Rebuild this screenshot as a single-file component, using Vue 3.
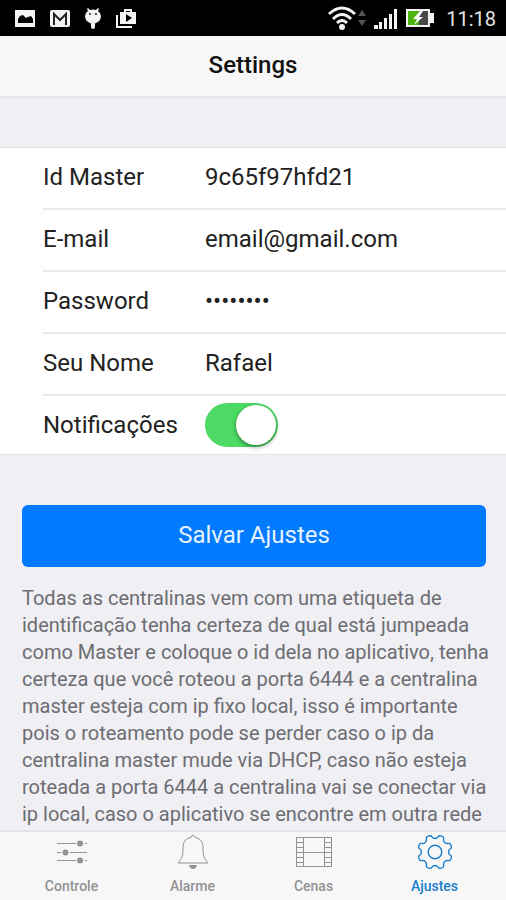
<script setup>
import { reactive, ref } from 'vue'

const fields = reactive([
  { id: 'master', label: 'Id Master', type: 'text', value: '9c65f97hfd21' },
  { id: 'email', label: 'E-mail', type: 'email', value: 'email@gmail.com' },
  { id: 'password', label: 'Password', type: 'password', value: 'abcd1234' },
  { id: 'name', label: 'Seu Nome', type: 'text', value: 'Rafael' }
])
const notify = ref(true)
const active = ref('Ajustes')
const tabs = ['Controle', 'Alarme', 'Cenas', 'Ajustes']

// Eight rounded teeth, with a notch pointing straight up
const gearPath = (() => {
  const points = []
  for (let i = 0; i < 240; i++) {
    const a = (i / 240) * Math.PI * 2
    const wave = Math.tanh(-2.2 * Math.cos(8 * a)) / Math.tanh(2.2)
    const r = 15.5 + 1.7 * wave
    points.push(`${(20 + r * Math.cos(a)).toFixed(2)} ${(20 + r * Math.sin(a)).toFixed(2)}`)
  }
  return `M${points.join('L')}Z`
})()
</script>

<template>
  <div class="screen">
    <div class="status">
      <div class="status-left">
        <svg width="22" height="20" viewBox="0 0 22 20">
          <path fill="#f4f4f4" fill-rule="evenodd" d="M1 1h20v17H1zM4 14h15v-4l-2-3-3 1-2 1-3-3-3 1-2 3z" />
        </svg>
        <svg width="22" height="20" viewBox="0 0 22 20">
          <rect x="1" y="1" width="20" height="17" rx="2" fill="#f4f4f4" />
          <path d="M5 16V5l6 6 6-6v11" fill="none" stroke="#222" stroke-width="2" />
        </svg>
        <svg width="18" height="24" viewBox="0 0 18 24">
          <path fill="#f4f4f4" d="M4 1l2 2q3-1 6 0l2-2 1 1-1 2q3 2 3 5 0 5-5 7-1 0-1 1v3q0 2-2 2t-2-2v-3q0-1-1-1-5-2-5-7 0-3 3-5L3 2z" />
          <circle cx="6" cy="7" r="1" fill="#222" /><circle cx="12" cy="7" r="1" fill="#222" />
        </svg>
        <svg width="22" height="22" viewBox="0 0 22 22">
          <path d="M2 7v12h15" fill="none" stroke="#f4f4f4" stroke-width="2" />
          <path d="M10 5V2h6v3" fill="none" stroke="#f4f4f4" stroke-width="2" />
          <path fill="#f4f4f4" fill-rule="evenodd" d="M5 4h16v12H5zM11 6v8l6-4z" />
        </svg>
      </div>
      <div class="status-right">
        <svg width="38" height="26" viewBox="0 0 38 26">
          <g fill="none" stroke="#f4f4f4" stroke-width="3">
            <path d="M1 8q13-12 26 0" /><path d="M5 13q9-9 18 0" /><path d="M9 17q5-5 10 0" />
          </g>
          <circle cx="14" cy="21" r="3" fill="#f4f4f4" />
          <path fill="#555" d="M30 10l4-6 4 6zM30 14l4 6 4-6z" />
        </svg>
        <svg width="24" height="24" viewBox="0 0 24 24" fill="#f4f4f4">
          <rect x="0" y="18" width="4" height="4" /><rect x="5" y="15" width="3" height="7" />
          <rect x="10" y="11" width="3" height="11" /><rect x="15" y="7" width="3" height="15" />
          <rect x="20" y="2" width="3" height="20" />
        </svg>
        <svg width="28" height="20" viewBox="0 0 28 20">
          <path fill="#f4f4f4" d="M0 0h24v4h4v10h-4v4H0z" />
          <rect x="2" y="2" width="11" height="14" fill="#4bb40c" /><rect x="13" y="2" width="9" height="14" fill="#484848" />
          <path fill="#fff" d="M14 2L7 10h4l-3 6 9-8h-4l4-6z" />
        </svg>
        <time>11:18</time>
      </div>
    </div>

    <header class="header"><h1>Settings</h1></header>

    <main class="content">
      <form @submit.prevent>
        <div class="list">
          <div v-for="field in fields" :key="field.id" class="row">
            <label :for="field.id">{{ field.label }}</label>
            <input :id="field.id" v-model="field.value" class="text" :type="field.type" autocomplete="off" />
          </div>
          <div class="row">
            <label for="notify">Notificações</label>
            <input id="notify" v-model="notify" class="switch" type="checkbox" />
          </div>
        </div>
        <button class="save" type="submit">Salvar Ajustes</button>
      </form>
      <p class="help">
        Todas as centralinas vem com uma etiqueta de identificação tenha certeza de qual está jumpeada
        como Master e coloque o id dela no aplicativo, tenha certeza que você roteou a porta 6444 e a
        centralina master esteja com ip fixo local, isso é importante pois o roteamento pode se perder
        caso o ip da centralina master mude via DHCP, caso não esteja roteada a porta 6444 a centralina
        vai se conectar via ip local, caso o aplicativo se encontre em outra rede
      </p>
    </main>

    <nav class="tabs">
      <a v-for="tab in tabs" :key="tab" href="#" class="tab" :class="{ active: active === tab }" @click.prevent="active = tab">
        <svg width="40" height="40" viewBox="0 0 40 40" fill="none" stroke="currentColor">
          <g v-if="tab === 'Controle'">
            <path d="M5 11.500h19M33 11.500h2M5 20.500h4M18 20.500h17M5 28.500h19M33 28.500h2" />
            <g fill="currentColor" stroke="none">
              <circle cx="28" cy="11.500" r="3" /><circle cx="13.500" cy="20.500" r="3" /><circle cx="28" cy="28.500" r="3" />
            </g>
          </g>
          <g v-else-if="tab === 'Alarme'">
            <path d="M18 5.500q0-2 2-2t2 2c6 1 8 5 8 10 0 9 1 11 5 15.500H5c4-4.500 5-6.500 5-15.500 0-5 2-9 8-10z" />
            <path d="M16 33h8q-1 4-4 4t-4-4z" fill="currentColor" stroke="none" />
          </g>
          <g v-else-if="tab === 'Cenas'">
            <path d="M2.500 5.500h35v29h-35zM9.500 5.500v29M30.500 5.500v29M9.500 20.500h21" />
            <path d="M3 10.500h6M3 15.500h6M3 20.500h6M3 25.500h6M3 30.500h6M31 10.500h6M31 15.500h6M31 20.500h6M31 25.500h6M31 30.500h6" />
          </g>
          <g v-else stroke-width="1.400">
            <path :d="gearPath" /><circle cx="20" cy="20" r="6.800" />
          </g>
        </svg>
        <span>{{ tab }}</span>
      </a>
    </nav>
  </div>
</template>

<style>
body {
  margin: 0;
}
</style>

<style scoped>
.screen {
  display: flex;
  flex-direction: column;
  height: 100vh;
  background: #efeff4;
  color: #222;
  font-family: Roboto, "Liberation Sans", sans-serif;
}
.status {
  box-sizing: border-box;
  display: flex;
  flex: none;
  align-items: center;
  justify-content: space-between;
  height: 36px;
  padding: 2px 10px 0 14px;
  background: #000;
}
.status-left,
.status-right {
  display: flex;
  align-items: center;
}
.status-left {
  gap: 13px;
}
.status-right {
  gap: 8px;
}
.status time {
  margin-left: 4px;
  color: #e4e4e4;
  font-size: 20px;
  line-height: 34px;
}
.header {
  flex: none;
  padding-bottom: 2px;
  border-bottom: 2px solid #e7e7ea;
  background: #f7f7f8;
  text-align: center;
}
h1 {
  margin: 0;
  color: #111;
  font-size: 24px;
  font-weight: 500;
  line-height: 58px;
}
.content {
  flex: 1;
  min-height: 0;
  overflow: auto;
  scrollbar-width: none;
}
.list {
  margin-top: 49px;
  border-top: 1px solid #e2e2e5;
  border-bottom: 1px solid #e2e2e5;
  background: #fff;
}
.row {
  box-sizing: border-box;
  display: grid;
  grid-template-columns: 162px 1fr;
  align-items: center;
  height: 62px;
  margin-left: 43px;
  padding-bottom: 2px;
  border-bottom: 2px solid #e8e8ea;
}
.row:last-child {
  height: 58px;
  padding-bottom: 0;
  border-bottom: 0;
}
.row label {
  font-size: 24px;
}
.text {
  width: 100%;
  min-width: 0;
  padding: 0;
  border: 0;
  outline: 0;
  background: none;
  color: #222;
  font: 24px Roboto, "Liberation Sans", sans-serif;
}
.switch {
  width: 73px;
  height: 44px;
  margin: 0;
  padding: 2px;
  border-radius: 22px;
  appearance: none;
  background: #d8d8dc;
}
.switch::before {
  display: block;
  width: 40px;
  height: 40px;
  border-radius: 50%;
  background: #fff;
  box-shadow: 0 2px 4px rgba(0, 0, 0, 0.4);
  content: "";
}
.switch:checked {
  background: #4cd964;
}
.switch:checked::before {
  margin-left: auto;
}
.save {
  display: block;
  width: calc(100% - 42px);
  height: 62px;
  margin: 50px 20px 18px 22px;
  padding: 0 0 2px;
  border: 0;
  border-radius: 6px;
  background: #007aff;
  color: #e8f3ff;
  font: 24px Roboto, "Liberation Sans", sans-serif;
}
.help {
  margin: 0 12px 0 22px;
  color: #6d6d72;
  font-size: 20px;
  line-height: 27px;
}
.tabs {
  display: grid;
  flex: none;
  grid-template-columns: repeat(4, 1fr);
  padding: 0 11px;
  border-top: 2px solid #e4e4e6;
  background: #f7f7f8;
}
.tab {
  display: flex;
  flex-direction: column;
  align-items: center;
  height: 68px;
  color: #929292;
  font-size: 14px;
  font-weight: 500;
  line-height: 28px;
  text-decoration: none;
}
.tab.active {
  color: #1b7fcb;
}
</style>
